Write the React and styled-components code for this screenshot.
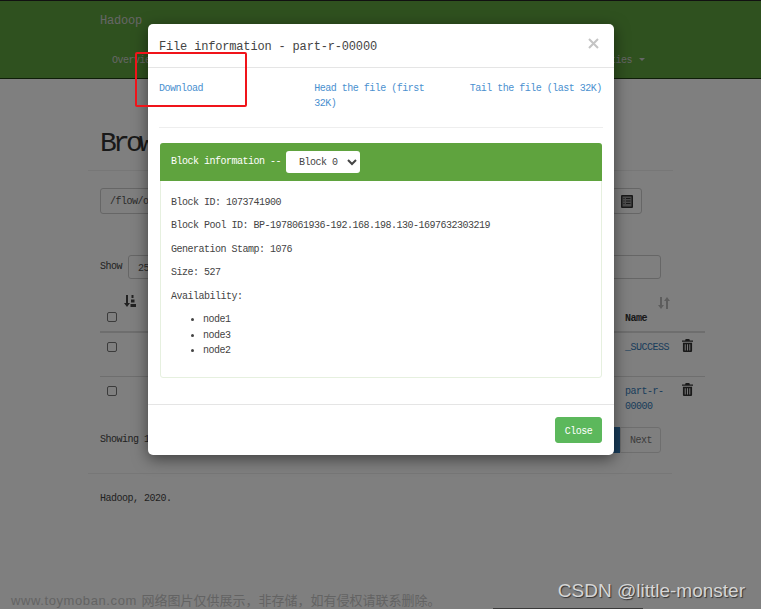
import React from "react";
import styled, { createGlobalStyle } from "styled-components";

const GlobalStyle = createGlobalStyle`
    html, body {
        margin: 0;
        padding: 0;
        background: #fff;
    }
    body {
        width: 761px;
        height: 609px;
        overflow: hidden;
        font-family: "Liberation Mono", "Noto Sans CJK SC", monospace;
        font-size: 10px;
        letter-spacing: -0.5px;
        line-height: 15.4px;
        color: #444;
    }
`;

const Page = styled.div`
    position: relative;
    width: 761px;
    height: 609px;
    overflow: hidden;
`;

const Navbar = styled.div`
    height: 79px;
    box-sizing: border-box;
    background: #5fa33e;
    border-top: 1px solid #222;
    border-bottom: 1px solid #1c3a10;
    padding: 13px 0 0 100px;
    color: #ccc;
`;

const Brand = styled.div`
    font-size: 12px;
    letter-spacing: -0.2px;
    line-height: 15px;
`;

const NavItems = styled.div`
    display: flex;
    align-items: center;
    margin-top: 24px;
    padding-left: 12px;
    width: 533px;
    justify-content: space-between;
`;

const Caret = styled.span`
    display: inline-block;
    margin-left: 7px;
    vertical-align: 2px;
    border-top: 3px solid #ccc;
    border-left: 3px solid transparent;
    border-right: 3px solid transparent;
`;

const Container = styled.div`
    width: 584px;
    box-sizing: border-box;
    margin-left: 88px;
    padding: 0 11px 0 12px;
`;

const Title = styled.h1`
    height: 92px;
    box-sizing: border-box;
    padding-top: 50px;
    font-size: 28px;
    font-weight: 400;
    letter-spacing: -3.8px;
    line-height: 30px;
    color: #333;
    border-bottom: 1px solid #eee;
    margin: 0 -12px 17px;
    text-indent: 12px;
`;

const PathRow = styled.div`
    display: flex;
    justify-content: space-between;
    width: 542px;
    height: 26px;
    margin-bottom: 41px;
`;

const Field = styled.div`
    box-sizing: border-box;
    border: 1px solid #ccc;
    border-radius: 3px;
    padding: 5px 9px;
    color: #555;
    width: ${({ $width }) => $width}px;
    height: ${({ $height }) => $height}px;
`;

const IconButton = styled.div`
    box-sizing: border-box;
    display: flex;
    align-items: center;
    justify-content: center;
    width: 30px;
    height: 26px;
    border: 1px solid #ccc;
    border-radius: 3px;
    color: #333;
`;

const ShowRow = styled.div`
    display: flex;
    align-items: center;
    justify-content: space-between;
    height: 24px;
    margin-bottom: 14px;
`;

const ShowLabel = styled.div`
    display: flex;
    align-items: center;
    gap: 6px;
`;

const Table = styled.div`
    width: 605px;
`;

const Row = styled.div`
    display: grid;
    grid-template-columns: 24px 501px 57px 1fr;
    box-sizing: border-box;
    padding-top: ${({ $top }) => $top}px;
    height: ${({ $height }) => $height}px;
    border-bottom: ${({ $border }) => $border};
`;

const Box = styled.span`
    display: block;
    box-sizing: border-box;
    width: 10px;
    height: 10px;
    margin: ${({ $top }) => $top}px 0 0 7px;
    border: 1px solid #767676;
    border-radius: 2px;
    background: #fff;
`;

const SortCell = styled.div`
    display: flex;
    height: 12px;
    margin-top: ${({ $top }) => $top}px;
    color: ${({ $dim }) => ($dim ? "#bbb" : "#444")};
    padding-left: ${({ $left }) => $left}px;
`;

const NameHead = styled.div`
    margin-top: 2px;
    font-weight: 700;
    color: #333;
`;

const FileLink = styled.a`
    color: #337ab7;
    overflow-wrap: anywhere;
`;

const TrashCell = styled.div`
    margin-top: -1px;
    color: #333;
`;

const Pager = styled.div`
    display: flex;
    align-items: center;
    justify-content: space-between;
    height: 26px;
`;

const PagerButtons = styled.div`
    display: flex;
`;

const PageButton = styled.div`
    box-sizing: border-box;
    height: 26px;
    padding: 5px 9px;
    width: ${({ $width }) => $width}px;
    border: 1px solid ${({ $active }) => ($active ? "#337ab7" : "#ddd")};
    background: ${({ $active }) => ($active ? "#337ab7" : "#fff")};
    color: #777;
    border-radius: ${({ $active }) => ($active ? "0" : "0 3px 3px 0")};
`;

const FooterRule = styled.div`
    width: 584px;
    margin: 20px 0 0 88px;
    border-top: 1px solid #eee;
`;

const FooterText = styled.div`
    margin: 17px 0 0 100px;
`;

const Backdrop = styled.div`
    position: absolute;
    inset: 0;
    background: rgba(0, 0, 0, 0.5);
`;

const Modal = styled.div`
    position: absolute;
    left: 148px;
    top: 24px;
    width: 466px;
    height: 431px;
    display: flex;
    flex-direction: column;
    background: #fff;
    border-radius: 5px;
    box-shadow: 0 4px 15px rgba(0, 0, 0, 0.5);
`;

const ModalHeader = styled.div`
    display: flex;
    align-items: center;
    justify-content: space-between;
    box-sizing: border-box;
    height: 44px;
    padding: 0 15px 0 11px;
    border-bottom: 1px solid #e5e5e5;
`;

const ModalTitle = styled.div`
    font-size: 12px;
    letter-spacing: -0.17px;
    color: #444;
    padding-top: 5px;
`;

const CloseX = styled.svg`
    width: 11px;
    height: 11px;
    margin-top: -4px;
    stroke: #c4c4c4;
    stroke-width: 2;
`;

const ModalBody = styled.div`
    flex: 1;
    padding: 13px 11px 0;
`;

const LinkRow = styled.div`
    display: grid;
    grid-template-columns: 133.33px 133.33px 1fr;
    column-gap: 22px;
    height: 46px;
    border-bottom: 1px solid #eee;
`;

const InfoLink = styled.a`
    color: #4a90cf;
    white-space: ${({ $nowrap }) => ($nowrap ? "nowrap" : "normal")};
`;

const Panel = styled.div`
    margin: 15px 1px 0;
    height: 235px;
    box-sizing: border-box;
    border: 1px solid #e6f0df;
    border-radius: 3px;
`;

const PanelHeading = styled.div`
    display: flex;
    align-items: center;
    gap: 5px;
    box-sizing: border-box;
    height: 38px;
    margin: -1px -1px 0;
    padding: 0 11px;
    background: #5fa33e;
    border-radius: 3px 3px 0 0;
    color: #fff;
`;

const BlockSelect = styled.select`
    box-sizing: border-box;
    width: 74px;
    height: 22px;
    padding: 0 0 0 9px;
    border: 0;
    border-radius: 3px;
    background: #fff;
    color: #444;
    font: inherit;
    letter-spacing: inherit;
`;

const PanelBody = styled.div`
    padding: 14px 10px 0;
`;

const InfoLine = styled.p`
    margin: 0 0 8px;
`;

const NodeList = styled.ul`
    margin: 0;
    padding-left: 32px;
    line-height: 15.6px;
`;

const ModalFooter = styled.div`
    display: flex;
    justify-content: flex-end;
    align-items: flex-start;
    box-sizing: border-box;
    height: 51px;
    padding: 12px 12px 0;
    border-top: 1px solid #e5e5e5;
`;

const CloseButton = styled.button`
    box-sizing: border-box;
    width: 47px;
    height: 26px;
    padding: 3px 0 0;
    border: 1px solid #5cb85c;
    border-radius: 3px;
    background: #5cb85c;
    color: #fff;
    font: inherit;
    letter-spacing: inherit;
`;

const RedMark = styled.div`
    position: absolute;
    left: 135px;
    top: 52px;
    width: 112px;
    height: 55px;
    box-sizing: border-box;
    border: 2.5px solid #f0141a;
    border-radius: 2px;
`;

const Watermark = styled.div`
    position: absolute;
    left: 11px;
    bottom: 0;
    height: 17px;
    font-family: "Liberation Sans", "Noto Sans CJK SC", sans-serif;
    font-size: 13px;
    letter-spacing: 0;
    line-height: 17px;
    color: #636363;
    white-space: nowrap;
`;

const WatermarkSite = styled.span`
    letter-spacing: 0.6px;
    margin-right: 1px;
`;

const Credit = styled.div`
    position: absolute;
    right: 16px;
    top: 580px;
    font-family: "Liberation Sans", sans-serif;
    font-size: 19px;
    letter-spacing: 0;
    line-height: 22px;
    color: #d6d6d6;
    text-shadow: 1px 1px 1px #333;
    white-space: nowrap;
`;

const EdgeStrip = styled.div`
    position: absolute;
    left: 493px;
    bottom: 0;
    width: 150px;
    height: 1px;
    background: #3a3a3a;
`;

const Trash = () => (
    <svg width="11" height="13" viewBox="0 0 12 14" fill="currentColor">
        <path d="M4 0h4l.6 1.5H12V3H0V1.5h3.4z" />
        <path d="M1 4h10v8.6c0 .8-.6 1.4-1.4 1.4H2.4C1.6 14 1 13.4 1 12.6zm2 1.5v7h1v-7zm2.5 0v7h1v-7zm2.5 0v7h1v-7z" fillRule="evenodd" />
    </svg>
);

const ListAlt = () => (
    <svg width="12" height="13" viewBox="0 0 12 13">
        <rect x="0" y="0" width="12" height="13" rx="1" fill="#333" />
        <rect x="1.500" y="1.500" width="9" height="10" fill="#999" />
        <path d="M2.500 3.500h1M2.500 6h1M2.500 8.500h1M5 3.500h4.500M5 6h4.500M5 8.500h4.500" stroke="#333" strokeWidth="1.2" />
    </svg>
);

const SortIcon = ({ attrs }) => (
    <svg width="12" height="12" viewBox="0 0 12 12" fill="currentColor">
        <path d="M2 0h2v8h2L3 12 0 8h2z" />
        {attrs ? (
            <path d="M7.500 0h2v3h-2zM7 4.500h3.500v3H7zM6.500 9H12v3H6.500z" />
        ) : (
            <path d="M8 12h2V4h2L9 0 6 4h2z" />
        )}
    </svg>
);

export default function App() {
    return (
        <Page>
            <GlobalStyle />
            <Navbar>
                <Brand>Hadoop</Brand>
                <NavItems>
                    <span>Overview</span>
                    <span>Utilities<Caret /></span>
                </NavItems>
            </Navbar>
            <Container>
                <Title>Browse Directory</Title>
                <PathRow>
                    <Field $width={500} $height={26}>/flow/output</Field>
                    <IconButton><ListAlt /></IconButton>
                </PathRow>
                <ShowRow>
                    <ShowLabel>
                        Show <Field $width={60} $height={24}>25</Field>
                    </ShowLabel>
                    <Field $width={180} $height={24} />
                </ShowRow>
                <Table>
                    <Row $top={6} $height={40} $border="2px solid #ddd">
                        <div>
                            <Box $top={13} />
                        </div>
                        <SortCell $left={0} $top={-4}><SortIcon attrs /></SortCell>
                        <div>
                            <SortCell $left={33} $top={-2} $dim><SortIcon /></SortCell>
                            <NameHead>Name</NameHead>
                        </div>
                        <div />
                    </Row>
                    <Row $top={7} $height={44} $border="1px solid #ddd">
                        <Box $top={2} />
                        <div />
                        <FileLink>_SUCCESS</FileLink>
                        <TrashCell><Trash /></TrashCell>
                    </Row>
                    <Row $top={7} $height={50} $border="0">
                        <Box $top={2} />
                        <div />
                        <FileLink>part-r-<br />00000</FileLink>
                        <TrashCell><Trash /></TrashCell>
                    </Row>
                </Table>
                <Pager>
                    <span>Showing 1 to 2 of 2 entries</span>
                    <PagerButtons>
                        <PageButton $active $width={22} />
                        <PageButton $width={41}>Next</PageButton>
                    </PagerButtons>
                </Pager>
            </Container>
            <FooterRule />
            <FooterText>Hadoop, 2020.</FooterText>

            <Backdrop />

            <Modal>
                <ModalHeader>
                    <ModalTitle>File information - part-r-00000</ModalTitle>
                    <CloseX viewBox="0 0 11 11"><path d="M1 1l9 9M10 1l-9 9" /></CloseX>
                </ModalHeader>
                <ModalBody>
                    <LinkRow>
                        <InfoLink>Download</InfoLink>
                        <InfoLink>Head the file (first 32K)</InfoLink>
                        <InfoLink $nowrap>Tail the file (last 32K)</InfoLink>
                    </LinkRow>
                    <Panel>
                        <PanelHeading>
                            Block information --
                            <BlockSelect defaultValue="0">
                                <option value="0">Block 0</option>
                            </BlockSelect>
                        </PanelHeading>
                        <PanelBody>
                            <InfoLine>Block ID: 1073741900</InfoLine>
                            <InfoLine>Block Pool ID: BP-1978061936-192.168.198.130-1697632303219</InfoLine>
                            <InfoLine>Generation Stamp: 1076</InfoLine>
                            <InfoLine>Size: 527</InfoLine>
                            <InfoLine>Availability:</InfoLine>
                            <NodeList>
                                <li>node1</li>
                                <li>node3</li>
                                <li>node2</li>
                            </NodeList>
                        </PanelBody>
                    </Panel>
                </ModalBody>
                <ModalFooter>
                    <CloseButton>Close</CloseButton>
                </ModalFooter>
            </Modal>

            <RedMark />
            <Watermark>
                <WatermarkSite>www.toymoban.com</WatermarkSite> 网络图片仅供展示，非存储，如有侵权请联系删除。
            </Watermark>
            <Credit>CSDN @little-monster</Credit>
            <EdgeStrip />
        </Page>
    );
}
